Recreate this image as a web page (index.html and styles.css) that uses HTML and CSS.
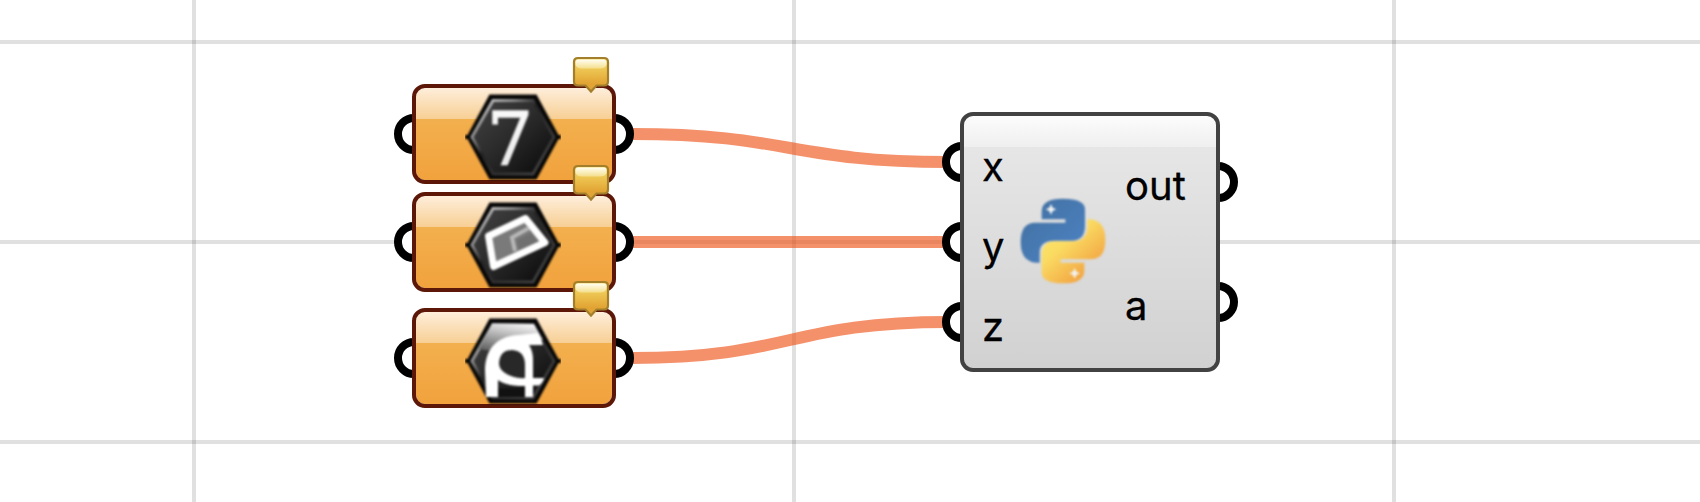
FILE: index.html
```html
<!DOCTYPE html>
<html lang="en">
<head>
<meta charset="utf-8">
<title>Node canvas</title>
<link rel="stylesheet" href="styles.css">
</head>
<body>
<main class="canvas">
  <svg class="wires" viewBox="0 0 1700 502">
    <path d="M632 134C790 134 790 162 948 162"/>
    <path d="M632 242H948"/>
    <path d="M632 358C790 358 790 322 948 322"/>
  </svg>

  <svg class="defs" width="0" height="0">
    <defs>
      <linearGradient id="dark" x1="0" y1="0" x2="1" y2="1"><stop offset="0" stop-color="#444"/><stop offset=".45" stop-color="#2c2c2c"/><stop offset="1" stop-color="#080808"/></linearGradient>
      <linearGradient id="rim" x1="0" y1="0" x2="1" y2="1"><stop offset="0" stop-color="#ddd"/><stop offset=".25" stop-color="#8d8d8d"/><stop offset=".42" stop-color="#222"/><stop offset="1" stop-color="#484848"/></linearGradient>
      <linearGradient id="seven" x1="0" y1="0" x2="0" y2="1"><stop offset="0" stop-color="#fff"/><stop offset="1" stop-color="#e2e2e2"/></linearGradient>
      <linearGradient id="sheen" x1=".7" y1="0" x2=".3" y2="1"><stop offset="0" stop-color="#f4f4f4"/><stop offset=".35" stop-color="#c4c4c4"/><stop offset="1" stop-color="#666"/></linearGradient>
      <linearGradient id="gold" x1="0" y1="0" x2="0" y2="1"><stop offset="0" stop-color="#f7dc72"/><stop offset=".3" stop-color="#efc956"/><stop offset=".75" stop-color="#e2a534"/><stop offset="1" stop-color="#dda036"/></linearGradient>
      <linearGradient id="gloss" x1="0" y1="0" x2="0" y2="1"><stop offset="0" stop-color="#fffef2"/><stop offset="1" stop-color="#f5df8c"/></linearGradient>
      <linearGradient id="blue" x1="0" y1="0" x2="1" y2="1"><stop offset="0" stop-color="#426f9e"/><stop offset="1" stop-color="#4d84c6"/></linearGradient>
      <linearGradient id="yellow" x1=".2" y1=".1" x2=".8" y2=".8"><stop offset="0" stop-color="#fbe468"/><stop offset=".35" stop-color="#fadb62"/><stop offset="1" stop-color="#f2a442"/></linearGradient>
      <filter id="soft" x="-5%" y="-5%" width="110%" height="110%" color-interpolation-filters="sRGB"><feGaussianBlur stdDeviation="1"/></filter>
      <filter id="softer" x="-5%" y="-5%" width="110%" height="110%" color-interpolation-filters="sRGB"><feGaussianBlur stdDeviation="2.400"/></filter>
      <filter id="tagsoft" x="-5%" y="-5%" width="110%" height="110%" color-interpolation-filters="sRGB"><feGaussianBlur stdDeviation=".6"/></filter>
      <g id="hex">
        <path d="M0 46H2.500L24.500 5.500H71.500L93.500 46H96V50H93.500L71.500 90.500H24.500L2.500 50H0Z" fill="#060606"/>
        <path d="M7 48 28 11.500H68L89 48 68 85H28Z" fill="url(#dark)" stroke="url(#rim)" stroke-width="3"/>
      </g>
      <g id="tag" filter="url(#tagsoft)">
        <path d="M6 2H32Q36 2 36 6V25.500Q36 29.500 32 29.500H24.500L19 35.500 13.500 29.500H6Q2 29.500 2 25.500V6Q2 2 6 2Z" fill="url(#gold)" stroke="#a37f2c" stroke-width="2.200"/>
        <path d="M6.500 3.500H31.500Q34.500 3.500 34.500 6V9Q33 12.500 28 12.500H10Q5 12.500 3.500 9V6Q3.500 3.500 6.500 3.500Z" fill="url(#gloss)"/>
      </g>
    </defs>
  </svg>

  <section class="node param first">
    <i class="port left"></i><i class="port right"></i>
    <div class="body">
      <svg class="icon" viewBox="0 0 96 96"><g filter="url(#soft)"><use href="#hex"/>
        <text class="seven" x="22" y="74.500">7</text></g></svg>
    </div>
    <svg class="tag" viewBox="0 0 38 38"><use href="#tag"/></svg>
  </section>

  <section class="node param second">
    <i class="port left"></i><i class="port right"></i>
    <div class="body">
      <svg class="icon" viewBox="0 0 96 96"><g filter="url(#soft)"><use href="#hex"/>
        <path d="M23.500 39 60.500 21.500 80 45.500 28.500 69.500Z" fill="#7a7a7a" stroke="#fff" stroke-width="7" stroke-linejoin="round"/>
        <path d="M64 31 47 40.500 50 54" fill="none" stroke="#b8b8b8" stroke-width="4"/>
        <path d="M66 36 52 43 54 53 73 44.500Z" fill="#707070"/></g></svg>
    </div>
    <svg class="tag" viewBox="0 0 38 38"><use href="#tag"/></svg>
  </section>

  <section class="node param third">
    <i class="port left"></i><i class="port right"></i>
    <div class="body">
      <svg class="icon" viewBox="0 0 96 96"><g filter="url(#soft)"><use href="#hex"/>
        <path d="M27 11H69L78 27Q46 17 27 38L14 36Z" fill="url(#sheen)"/>
        <path d="M21 84 20 58C20 36 32 23 54 22L73 20Q77 26 78 32H64Q68 38 68 47V65H79Q78 70 74 72.500H68V84H60V73Q40 73 33 67V84Z" fill="#fff"/>
        <path d="M47 37Q60 38 60 52V65Q49 66 40 60Q34 56 34 50Q35 37 47 37Z" fill="#282828"/>
        <path d="M33 75.500H60V84H33Z" fill="#111"/></g></svg>
    </div>
    <svg class="tag" viewBox="0 0 38 38"><use href="#tag"/></svg>
  </section>

  <section class="node script">
    <i class="port left in-x"></i><i class="port left in-y"></i><i class="port left in-z"></i>
    <i class="port right out-out"></i><i class="port right out-a"></i>
    <div class="body">
      <div class="inputs"><span>x</span><span>y</span><span>z</span></div>
      <svg class="python" viewBox="42 35 264 264"><defs>
        <path id="snake" d="M110 102V78Q110 40 174 40Q240 40 240 72V122Q240 166 200 166H149Q104 166 104 202V232H92Q47 228 47 170Q47 112 91 112H181V102Z"/></defs>
        <g filter="url(#softer)"><use href="#snake" fill="url(#blue)"/>
        <path d="M110 232V207Q112 168 149 168H200Q247 168 247 122V102H257Q301 107 301 164Q301 222 257 222H167V232H238V256Q238 294 174 294Q110 294 110 260Z" fill="url(#yellow)"/>
        <path class="spark" d="M138 56 143 67 154 72 143 77 138 88 133 77 122 72 133 67ZM209 248 214 259 225 264 214 269 209 280 204 269 193 264 204 259Z"/></g></svg>
      <div class="outputs"><span>out</span><span>a</span></div>
    </div>
  </section>
</main>
</body>
</html>
```
FILE: styles.css
```css
body { margin: 0; }
.canvas {
  position: relative;
  width: 1700px;
  height: 502px;
  overflow: hidden;
  background-color: #fff;
  background-image:
    linear-gradient(90deg, rgba(0,0,0,.12) 4px, transparent 4px),
    linear-gradient(rgba(0,0,0,.12) 4px, transparent 4px);
  background-size: 600px 100%, 100% 200px;
  background-position: 192px 0, 0 40px;
}
.defs { position: absolute; }
.wires { position: absolute; inset: 0; width: 1700px; height: 502px; }
.wires path { fill: none; stroke: rgba(238,81,22,.64); stroke-width: 12; }
.node { position: absolute; }
.param { left: 412px; width: 204px; height: 100px; }
.first { top: 84px; }
.second { top: 192px; }
.third { top: 308px; }
.script { left: 960px; top: 112px; width: 260px; height: 260px; }
.body {
  position: relative;
  box-sizing: border-box;
  width: 100%;
  height: 100%;
  border: 4px solid #5c1708;
  border-radius: 13px;
  display: flex;
}
.param .body {
  justify-content: center;
  background: linear-gradient(#feeedb 0, #f7cf94 31px, #f3b04e 31px, #f1a23d 100%) padding-box;
}
.icon { width: 96px; height: 96px; margin: 1px 0 0 -2px; flex: none; }
.seven {
  font: 72px "DejaVu Serif", serif;
  fill: url(#seven);
  stroke: #f2f2f2;
  stroke-width: 1.6px;
}
.port {
  position: absolute;
  box-sizing: border-box;
  width: 40px;
  height: 40px;
  top: 30px;
  border: 8px solid #000;
  border-radius: 50%;
  background: #fff;
}
.left { left: -18px; }
.right { right: -18px; }
.tag { position: absolute; left: 160px; top: -28px; width: 38px; height: 38px; z-index: 2; }
.script .body {
  border-color: #424242;
  background: linear-gradient(#fcfcfc 0, #efefef 31px, #e6e6e6 31px, #d1d1d1 100%) padding-box;
  font: 40px/80px Inter, sans-serif;
  color: #000;
}
.in-x { top: 30px; }
.in-y { top: 110px; }
.in-z { top: 190px; }
.out-out { top: 50px; }
.out-a { top: 170px; }
.inputs, .outputs { display: flex; flex-direction: column; }
.inputs { box-sizing: border-box; width: 55px; padding: 11px 0 0 18px; }
.python { width: 88px; height: 88px; margin-top: 81px; flex: none; }
.spark { fill: #f2f4f4; }
.outputs { padding: 10px 0 0 18px; line-height: 120px; }
.outputs span, .inputs span { -webkit-text-stroke: .3px #000; }
```
